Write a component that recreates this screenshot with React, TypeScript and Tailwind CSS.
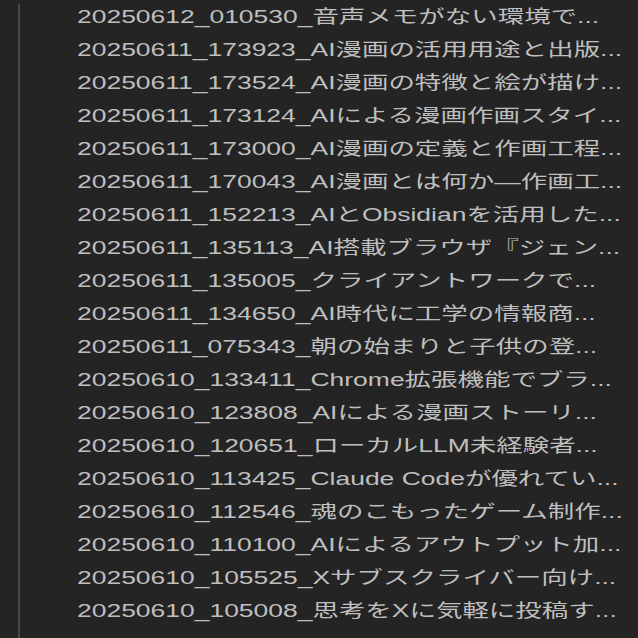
const notes = [
  "20250612_010530_音声メモがない環境で...",
  "20250611_173923_AI漫画の活用用途と出版...",
  "20250611_173524_AI漫画の特徴と絵が描け...",
  "20250611_173124_AIによる漫画作画スタイ...",
  "20250611_173000_AI漫画の定義と作画工程...",
  "20250611_170043_AI漫画とは何か—作画工...",
  "20250611_152213_AIとObsidianを活用した...",
  "20250611_135113_AI搭載ブラウザ『ジェン...",
  "20250611_135005_クライアントワークで...",
  "20250611_134650_AI時代に工学の情報商...",
  "20250611_075343_朝の始まりと子供の登...",
  "20250610_133411_Chrome拡張機能でブラ...",
  "20250610_123808_AIによる漫画ストーリ...",
  "20250610_120651_ローカルLLM未経験者...",
  "20250610_113425_Claude Codeが優れてい...",
  "20250610_112546_魂のこもったゲーム制作...",
  "20250610_110100_AIによるアウトプット加...",
  "20250610_105525_Xサブスクライバー向け...",
  "20250610_105008_思考をXに気軽に投稿す...",
];

export default function App() {
  return (
    <div className="flex w-[638px] h-[638px] overflow-hidden bg-[#242424] font-['Liberation_Sans','Noto_Sans_CJK_JP',sans-serif]">
      {/* folder guide line */}
      <div className="ml-[18px] mt-[4px] w-[2px] self-stretch bg-[#4a4a4a]" />

      <ul className="ml-[57px] pt-[1px] origin-left scale-x-[1.47] text-[18px] leading-[33px] text-[#bfbfbf] whitespace-nowrap">
        {notes.map((n) => (
          <li key={n}>{n}</li>
        ))}
      </ul>
    </div>
  );
}
